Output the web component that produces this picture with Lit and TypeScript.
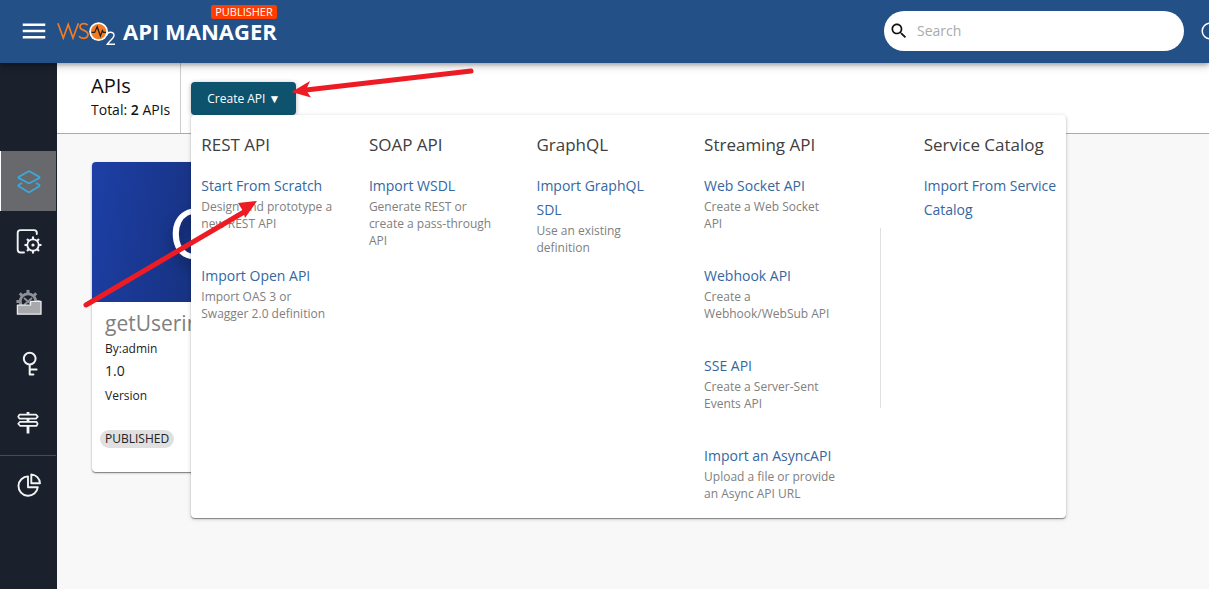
import { LitElement, html, css, svg } from "lit";
import { customElement } from "lit/decorators.js";
import { classMap } from "lit/directives/class-map.js";

interface MenuItem {
  label: string;
  text?: string;
}
interface MenuGroup {
  title: string;
  items: MenuItem[];
  divided?: boolean;
}

const GROUPS: MenuGroup[] = [
  {
    title: "REST API",
    items: [
      { label: "Start From Scratch", text: "Design and prototype a new REST API" },
      { label: "Import Open API", text: "Import OAS 3 or Swagger 2.0 definition" },
    ],
  },
  {
    title: "SOAP API",
    items: [{ label: "Import WSDL", text: "Generate REST or create a pass-through API" }],
  },
  {
    title: "GraphQL",
    items: [{ label: "Import GraphQL SDL", text: "Use an existing definition" }],
  },
  {
    title: "Streaming API",
    items: [
      { label: "Web Socket API", text: "Create a Web Socket API" },
      { label: "Webhook API", text: "Create a Webhook/WebSub API" },
      { label: "SSE API", text: "Create a Server-Sent Events API" },
      { label: "Import an AsyncAPI", text: "Upload a file or provide an Async API URL" },
    ],
  },
  {
    title: "Service Catalog",
    divided: true,
    items: [{ label: "Import From Service Catalog" }],
  },
];

/* Outline of a cog centred on (cx, cy), with its teeth as short strokes. */
const cog = (cx: number, cy: number, r: number, tooth: number, w: number) => svg`
  <circle cx=${cx} cy=${cy} r=${r} fill="none" stroke="currentColor" stroke-width="1.8"></circle>
  ${[0, 45, 90, 135, 180, 225, 270, 315].map(
    (a) => svg`<path d="M${cx} ${cy - r}V${cy - r - tooth}" transform="rotate(${a} ${cx} ${cy})"
      stroke="currentColor" stroke-width=${w}></path>`
  )}`;

const ICONS = {
  apis: svg`<g fill="none" stroke="#3fa7d6" stroke-width="1.8" stroke-linejoin="round" stroke-linecap="round">
    <path d="M14.800 4.500 24.200 9.900Q25 10.500 24.200 11.100L14.800 16Q14 16.400 13.200 16L3.800 11.100Q3 10.500 3.800 9.900L13.200 4.500Q14 4 14.800 4.500Z"></path>
    <path d="M6.500 16.400 3.800 17.800Q3 18.500 3.800 19.200L13.200 24.900Q14 25.400 14.800 24.900L24.200 19.200Q25 18.500 24.200 17.800L21.500 16.400"></path></g>`,
  services: svg`<path d="M9 24.500H5.500Q2.700 24.500 2.700 21.500V4.700Q2.700 2.100 5.500 2.100H19Q21.800 2.100 21.800 4.700V6" fill="none"
      stroke="currentColor" stroke-width="1.9" stroke-linecap="round"></path>
    ${cog(18, 17, 5.7, 2.8, 2.1)}<circle cx="18" cy="17" r="1.6" fill="currentColor"></circle>`,
  products: svg`<g color="#8d9096"><circle cx="13" cy="12.500" r="7.6" fill="none" stroke="currentColor" stroke-width="2.6"></circle>
    ${cog(13, 12.5, 8.2, 3.4, 3)}
    <path d="M9 9 17 16M17 9 9 16" stroke="currentColor" stroke-width="1.8"></path></g>
    <path d="M2.4 25.200V16.200H15.6V12.400H26V25.200Z" fill="#a7a9ad" stroke="#ececee" stroke-width="1.3" stroke-linejoin="round"></path>`,
  scopes: svg`<g fill="none" stroke="currentColor" stroke-width="2" stroke-linecap="round">
    <circle cx="14.7" cy="8.6" r="5.9"></circle><path d="M14.7 15V24.4H18.4M14.7 19.4H21.6" stroke-linejoin="round"></path></g>`,
  policies: svg`<g fill="none" stroke="currentColor" stroke-width="1.7" stroke-linejoin="round">
    <path d="M4.4 3.600H21L22.8 5.600 21 7.600H4.4L3.2 5.600Z"></path><path d="M5 10.800H21.6L22.6 12.800 21.6 14.800H5L3.2 12.800Z"></path></g>
    <path d="M13 1V4M13 7.500V11M13 15V22.400" stroke="currentColor" stroke-width="2.8"></path>`,
  analytics: svg`<g fill="none" stroke="currentColor" stroke-width="1.9" stroke-linejoin="round">
    <path d="M13 4.4A9.7 9.7 0 1 0 22.8 15.2H13Z"></path><path d="M16.3 2.4A9.4 9.4 0 0 1 25 11.2H16.3Z"></path></g>`,
};

type IconName = keyof typeof ICONS;

const NAV: { icon: IconName; label: string; active?: boolean; split?: boolean }[] = [
  { icon: "apis", label: "APIs", active: true },
  { icon: "services", label: "Services" },
  { icon: "products", label: "API Products" },
  { icon: "scopes", label: "Scopes" },
  { icon: "policies", label: "Policies" },
  { icon: "analytics", label: "Analytics", split: true },
];

@customElement("top-bar")
class TopBar extends LitElement {
  static styles = css`
    :host {
      display: flex;
      align-items: center;
      box-sizing: border-box;
      height: 63px;
      padding: 0 0 2px 19px;
      background: #225087;
      color: #fff;
      box-shadow: 0 2px 4px rgba(0, 0, 0, 0.25), 0 4px 8px rgba(0, 0, 0, 0.14);
    }
    .menu {
      display: flex;
      padding: 0;
      border: 0;
      background: none;
      color: inherit;
    }
    .brand {
      display: grid;
      grid-template-columns: auto auto;
      align-items: center;
      margin: 0 0 14px 8px;
      color: inherit;
      text-decoration: none;
    }
    .name {
      margin-left: 6px;
      font-size: 22px;
      line-height: 24px;
      font-weight: 700;
      white-space: nowrap;
    }
    .badge {
      grid-column: 2;
      justify-self: end;
      padding: 0 4px;
      border-radius: 2px;
      background: #ff3d00;
      font-size: 11px;
      line-height: 14px;
    }
    .logo {
      margin: -3px 0;
    }
    .search {
      display: flex;
      align-items: center;
      box-sizing: border-box;
      width: 300px;
      height: 40px;
      margin-left: auto;
      padding-left: 5px;
      border-radius: 20px;
      background: #fff;
    }
    .search input {
      flex: 1;
      min-width: 0;
      margin: 0 16px 0 8px;
      padding: 0;
      border: 0;
      outline: 0;
      background: none;
      font: inherit;
      font-size: 14px;
      color: #222;
    }
    .search input::placeholder {
      color: #aaa;
      opacity: 1;
    }
    .account {
      display: flex;
      width: 8px;
      margin-left: 17px;
      padding: 0;
      border: 0;
      background: none;
      color: inherit;
      overflow: hidden;
    }
    .account svg {
      flex: none;
    }
  `;
  render() {
    return html`
      <button class="menu" aria-label="Toggle navigation">
        <svg width="30" height="30" viewBox="0 0 24 24" fill="currentColor">
          <path d="M3 18h18v-2H3v2zm0-5h18v-2H3v2zm0-7v2h18V6H3z"></path>
        </svg>
      </button>
      <a class="brand" href="#">
        <span class="badge">PUBLISHER</span>
        <svg class="logo" width="60" height="30" viewBox="0 0 60 30" role="img" aria-label="WSO2">
          <g fill="none" stroke="#f47b20" stroke-width="1.7">
            <path d="M.9 7.2 6.3 22 11.2 8.5 16 22 21.4 7.2"></path>
            <path d="M30.6 9.2C28 6.4 22.7 7.6 23 11.1 23.3 14.8 31 14 31 18.4 31 22.6 25 23.6 22 20.2"></path>
          </g>
          <circle cx="41.6" cy="15.6" r="9.4" fill="#fff"></circle>
          <circle cx="41.6" cy="15.6" r="7.7" fill="#f47b20"></circle>
          <path d="M34.5 16.4H37.6L40.2 10.8 43.4 20 45.4 14.6 46.4 16.4H49" fill="none" stroke="#222" stroke-width="1.3"></path>
          <path d="M49.8 19.5C50 15.3 57 15 57 19.3 57 22.5 52.6 24.4 50.2 28.3H58" fill="none" stroke="#fff" stroke-width="1.4"></path>
        </svg>
        <span class="name">API MANAGER</span>
      </a>
      <label class="search">
        <svg width="20" height="20" viewBox="0 0 24 24" fill="#111">
          <path
            d="M15.5 14h-.79l-.28-.27C15.41 12.59 16 11.11 16 9.5 16 5.91 13.09 3 9.5 3S3 5.91 3 9.5 5.91 16 9.5 16c1.61 0 3.09-.59 4.23-1.57l.27.28v.79l5 4.99L20.49 19l-4.99-5zm-6 0C7.01 14 5 11.99 5 9.5S7.01 5 9.5 5 14 7.01 14 9.5 11.99 14 9.5 14z"
          ></path>
        </svg>
        <input type="text" placeholder="Search" aria-label="Search" />
      </label>
      <button class="account" aria-label="Account">
        <svg width="18" height="18" viewBox="0 0 18 18">
          <circle cx="9" cy="9" r="7.8" fill="none" stroke="currentColor" stroke-width="1.5"></circle>
        </svg>
      </button>
    `;
  }
}

@customElement("side-nav")
class SideNav extends LitElement {
  static styles = css`
    :host {
      display: block;
      box-sizing: border-box;
      width: 57px;
      padding-top: 88px;
      background: #1a212d;
    }
    .item {
      display: flex;
      justify-content: center;
      padding: 16px 0 16px 2px;
      margin: 0 1px 1px 0;
      color: #f2f3f4;
    }
    .active {
      padding-left: 1px;
      background: #67696d;
      border-left: 1px solid #fff;
    }
    .split {
      margin-top: -1px;
      border-top: 1px solid #474c56;
    }
  `;
  render() {
    return html`<nav>
      ${NAV.map(
        (n) => html`<a
          class=${classMap({ item: true, active: !!n.active, split: !!n.split })}
          href="#"
          aria-label=${n.label}
          ><svg width="28" height="28" viewBox="0 0 28 28">${ICONS[n.icon]}</svg></a
        >`
      )}
    </nav>`;
  }
}

@customElement("create-menu")
class CreateMenu extends LitElement {
  static styles = css`
    :host {
      display: flex;
      box-sizing: border-box;
      gap: 35px;
      padding: 18px 10px 16px;
      border-radius: 4px;
      background: #fff;
      box-shadow: 0 1px 1px rgba(0, 0, 0, 0.4), 0 1px 4px rgba(0, 0, 0, 0.2);
    }
    .group {
      flex: 1 1 0;
      min-width: 0;
    }
    .divider {
      align-self: center;
      width: 1px;
      height: 180px;
      margin: 0 8px;
      background: #e0e0e0;
    }
    .title {
      margin: 0 0 17px;
      font-size: 17px;
      line-height: 24px;
      font-weight: 400;
      color: #404040;
      white-space: nowrap;
    }
    .entry {
      margin-bottom: 32px;
    }
    .entry:last-child {
      margin-bottom: 0;
    }
    .link {
      display: block;
      font-size: 14px;
      line-height: 24px;
      color: #34679f;
      text-decoration: none;
    }
    .text {
      margin: 0;
      font-size: 12px;
      line-height: 17px;
      color: #808080;
    }
  `;
  render() {
    return GROUPS.map(
      (g) => html`
        ${g.divided ? html`<div class="divider"></div>` : ""}
        <section class="group">
          <h2 class="title">${g.title}</h2>
          ${g.items.map(
            (i) => html`<div class="entry">
              <a class="link" href="#">${i.label}</a>
              ${i.text ? html`<p class="text">${i.text}</p>` : ""}
            </div>`
          )}
        </section>
      `
    );
  }
}

@customElement("api-card")
class ApiCard extends LitElement {
  static styles = css`
    :host {
      display: block;
      width: 204px;
      border-radius: 4px;
      background: #fff;
      box-shadow: 0 1px 1px rgba(0, 0, 0, 0.4), 0 1px 3px rgba(0, 0, 0, 0.2);
      overflow: hidden;
    }
    .thumb {
      display: flex;
      align-items: center;
      justify-content: center;
      height: 140px;
      background: linear-gradient(100deg, #1d3fa6, #142c70 80%);
      color: #fff;
      font-size: 70px;
      line-height: 96px;
      text-shadow: 2px 8px 14px rgba(0, 0, 0, 0.4);
    }
    .body {
      padding: 5px 8px 24px;
    }
    .title,
    .line {
      margin: 0;
      padding-left: 5px;
      color: #222;
      font-size: 12px;
      line-height: 20px;
    }
    .title {
      font-size: 21px;
      line-height: 32px;
      font-weight: 400;
      color: #808080;
    }
    .version {
      margin-bottom: 3px;
      font-size: 14px;
      line-height: 24px;
    }
    .status {
      display: inline-block;
      margin-top: 24px;
      padding: 0 5px;
      border-radius: 9px;
      background: #e0e0e0;
      color: #222;
      font-size: 12px;
      line-height: 18px;
    }
  `;
  render() {
    return html`
      <div class="thumb">G</div>
      <div class="body">
        <h2 class="title">getUserinfo</h2>
        <p class="line">By:admin</p>
        <p class="line version">1.0</p>
        <p class="line">Version</p>
        <span class="status">PUBLISHED</span>
      </div>
    `;
  }
}

@customElement("app-root")
class AppRoot extends LitElement {
  static styles = css`
    :host {
      position: relative;
      display: flex;
      flex-direction: column;
      min-height: 100vh;
      background: #f8f8f8;
      font-family: "Open Sans", "Noto Sans", sans-serif;
      overflow: hidden;
    }
    top-bar {
      z-index: 2;
    }
    .shell {
      flex: 1;
      display: flex;
    }
    .main {
      flex: 1;
      min-width: 0;
    }
    .head {
      display: flex;
      align-items: stretch;
      box-sizing: border-box;
      height: 71px;
      padding-left: 34px;
      border-bottom: 1px solid #aaa;
      background: #fff;
    }
    .summary {
      padding: 9px 10px 0 0;
      border-right: 1px solid #ccc;
      color: #111;
    }
    .heading {
      margin: 0;
      font-size: 20px;
      line-height: 28px;
      font-weight: 400;
    }
    .total {
      margin: 0;
      font-size: 14px;
      line-height: 20px;
    }
    .total b {
      font-weight: 600;
    }
    .create {
      position: relative;
      align-self: flex-start;
      margin: 19px 0 0 10px;
    }
    .button {
      display: block;
      height: 33px;
      padding: 0 16px;
      border: 0;
      border-radius: 4px;
      background: #0d536e;
      box-shadow: 0 1px 5px rgba(0, 0, 0, 0.3);
      color: #fff;
      font: inherit;
      font-size: 12px;
      line-height: 33px;
      white-space: nowrap;
    }
    .popup {
      position: absolute;
      z-index: 1;
      top: 100%;
      left: 0;
      width: 875px;
    }
    .cards {
      display: flex;
      padding: 28px 35px;
    }
    .marks {
      position: absolute;
      z-index: 3;
      top: 0;
      left: 0;
      pointer-events: none;
    }
  `;
  render() {
    return html`
      <top-bar></top-bar>
      <div class="shell">
        <side-nav></side-nav>
        <main class="main">
          <header class="head">
            <div class="summary">
              <h1 class="heading">APIs</h1>
              <p class="total">Total: <b>2</b> APIs</p>
            </div>
            <div class="create">
              <button class="button" aria-haspopup="true" aria-expanded="true">Create API ▼</button>
              <create-menu class="popup"></create-menu>
            </div>
          </header>
          <div class="cards"><api-card></api-card></div>
        </main>
      </div>
      <svg class="marks" width="480" height="320" viewBox="0 0 480 320" aria-hidden="true">
        <g stroke="#ed1c24" stroke-width="5" stroke-linecap="round" fill="#ed1c24">
          <path d="M471 71 306 90"></path>
          <path d="M86 305 244 212"></path>
          <path d="M291.500 92 310 81 306 90 311 97.500Z" stroke="none"></path>
          <path d="M257 201 238 203 243 211 245 218Z" stroke="none"></path>
        </g>
      </svg>
    `;
  }
}
